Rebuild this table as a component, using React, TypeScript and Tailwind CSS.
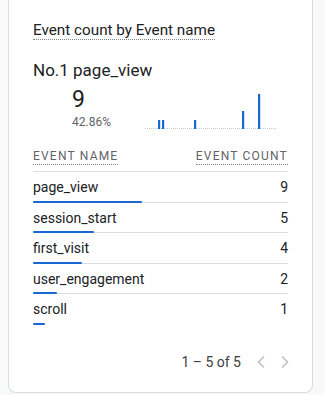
const rows = [
  { name: "page_view", count: 9 },
  { name: "session_start", count: 5 },
  { name: "first_visit", count: 4 },
  { name: "user_engagement", count: 2 },
  { name: "scroll", count: 1 },
];

const total = rows.reduce((s, r) => s + r.count, 0);

// sparkline bars: x offset, height
const spark = [
  { x: 13, h: 9 },
  { x: 17, h: 9 },
  { x: 49, h: 9 },
  { x: 97, h: 18 },
  { x: 113, h: 35 },
];

function Sparkline() {
  return (
    <svg width="132" height="40" viewBox="0 0 132 40">
      <line x1="0" y1="39.5" x2="132" y2="39.5" stroke="#c4c7cc" strokeWidth="1" strokeDasharray="1 1" />
      {spark.map((b, i) => (
        <rect key={i} x={b.x} y={40 - b.h} width="2.2" height={b.h} fill="#1967d2" />
      ))}
    </svg>
  );
}

export default function App() {
  return (
    <div
      className="h-[395px] w-[325px] bg-[#f8f9fa] pl-[8px] pr-[12px] pb-[2px] flex flex-col"
      style={{ fontFamily: "Roboto, 'Liberation Sans', sans-serif" }}
    >
      <div className="flex-1 bg-white border-x border-b border-[#dadce0] rounded-b-[8px] px-[24px] flex flex-col">
        {/* Title */}
        <div className="pt-[18px]">
          <span className="text-[15.25px] leading-[20px] text-[#202124] border-b border-dotted border-[#80868b]">
            Event count by Event name
          </span>
        </div>

        {/* Top item */}
        <div className="mt-[16px] text-[17px] leading-[24px] text-[#202124]">
          No.1 page_view
        </div>
        <div className="flex">
          <div className="ml-[39px] w-[73px] flex flex-col">
            <div className="mt-[4px] text-[23px] leading-[28px] text-[#202124]">9</div>
            <div className="text-[12px] leading-[16px] text-[#5f6368]">42.86%</div>
          </div>
          <div className="mt-[7px]">
            <Sparkline />
          </div>
        </div>

        {/* Table header */}
        <div className="mt-[18px] flex justify-between border-b border-[#dadce0] pb-[6px]">
          <span className="text-[12px] leading-[16px] tracking-[0.1em] text-[#5f6368] border-b border-dotted border-[#80868b]">
            EVENT NAME
          </span>
          <span className="text-[12px] leading-[16px] tracking-[0.1em] text-[#5f6368] border-b border-dotted border-[#80868b]">
            EVENT COUNT
          </span>
        </div>

        {/* Rows */}
        {rows.map((r, i) => (
          <div
            key={r.name}
            className={i < rows.length - 1 ? "border-b border-[#dadce0]" : ""}
          >
            <div className="pt-[5px] flex justify-between text-[14px] leading-[20px] text-[#202124]">
              <span>{r.name}</span>
              <span>{r.count}</span>
            </div>
            <div className="mt-[3.5px] mb-[-1px] h-[2px] flex">
              <div
                className="h-[2px] bg-[#1967d2] rounded-[1px]"
                style={{ width: `${(r.count / total) * 100}%` }}
              />
            </div>
          </div>
        ))}

        {/* Pagination */}
        <div className="mt-auto mb-[20px] flex items-center justify-end gap-[16px]">
          <span className="text-[14px] leading-[20px] text-[#3c4043]">1 – 5 of 5</span>
          <div className="flex items-center gap-[16px] mr-[-1px]">
            <svg width="8" height="14" viewBox="0 0 8 14">
              <path d="M7 1.5 L1.5 7 L7 12.5" fill="none" stroke="#bdc1c6" strokeWidth="1.6" />
            </svg>
            <svg width="8" height="14" viewBox="0 0 8 14">
              <path d="M1 1.5 L6.5 7 L1 12.5" fill="none" stroke="#bdc1c6" strokeWidth="1.6" />
            </svg>
          </div>
        </div>
      </div>
    </div>
  );
}
